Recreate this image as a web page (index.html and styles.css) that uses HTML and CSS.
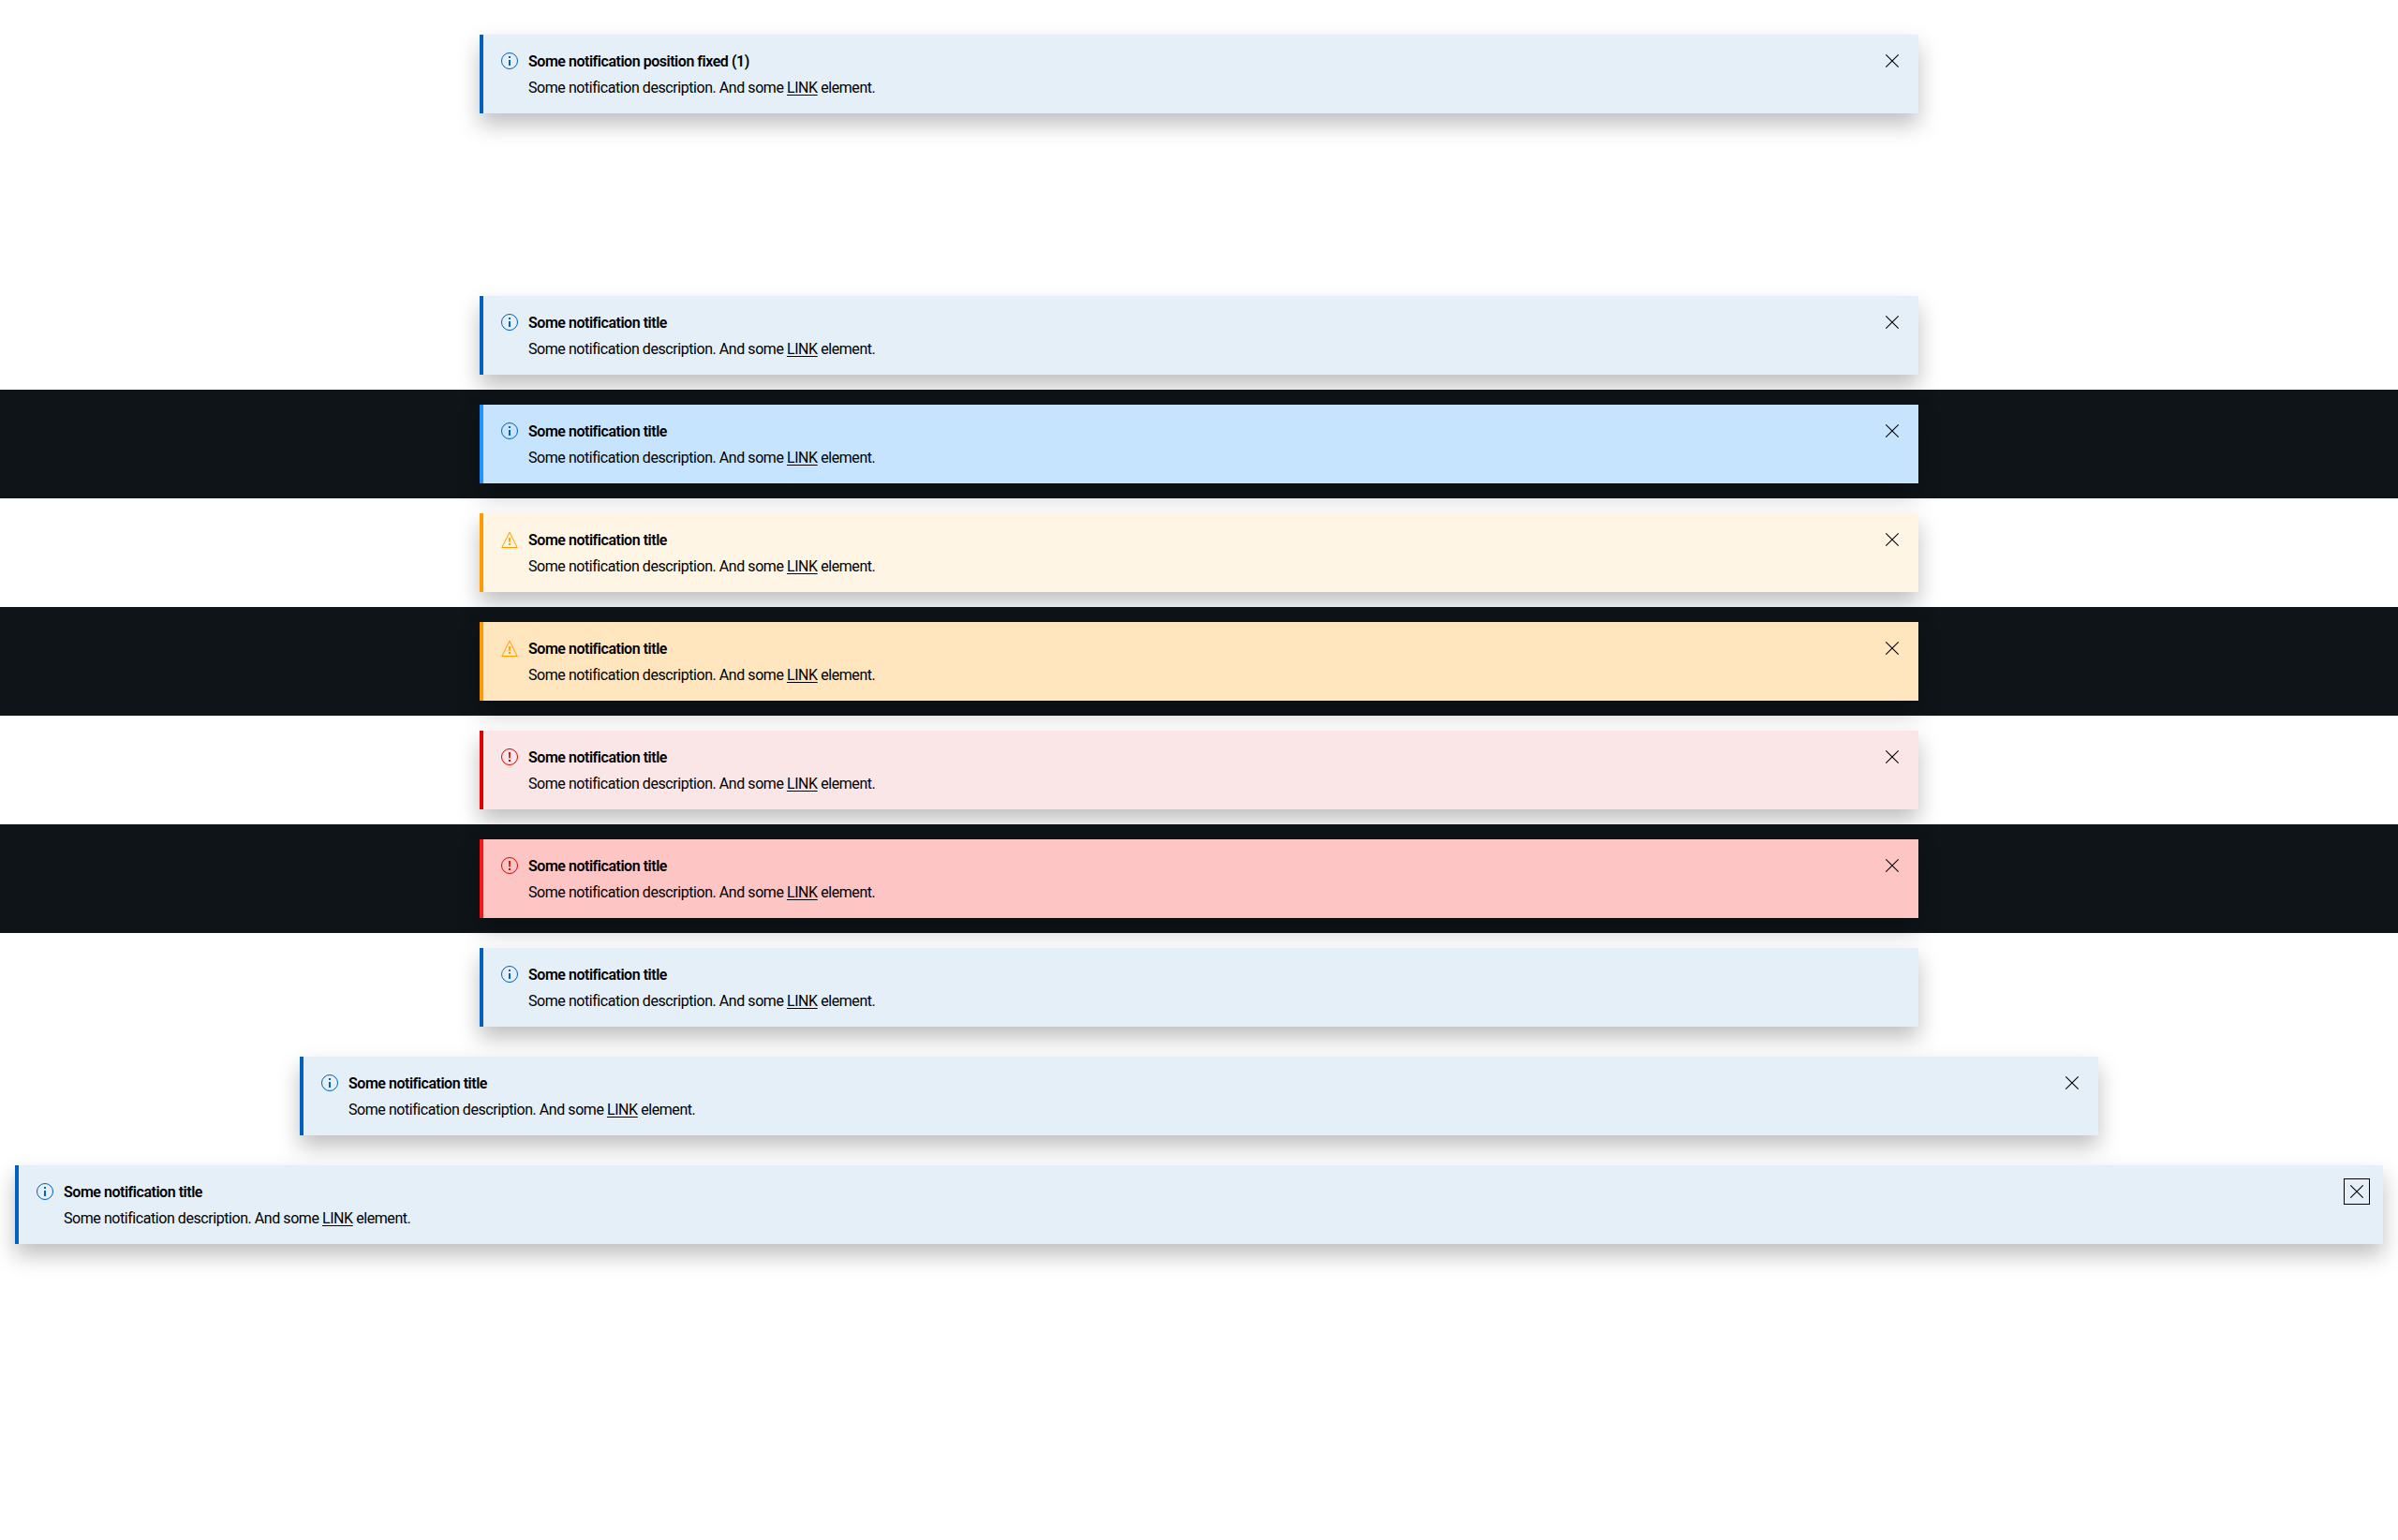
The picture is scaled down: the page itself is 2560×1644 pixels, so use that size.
FILE: index.html
```html
<!DOCTYPE html>
<html lang="en">
<head>
<meta charset="utf-8">
<title>Inline notifications</title>
<link rel="stylesheet" href="styles.css">
</head>
<body>
<svg class="defs" aria-hidden="true">
  <symbol id="info" viewBox="0 0 24 24"><circle cx="12" cy="12" r="8.5" fill="none" stroke="currentColor"/><path d="M11 7h2v2h-2zM11 11h2v6h-2z" fill="currentColor"/></symbol>
  <symbol id="warning" viewBox="0 0 24 24"><path d="M12 4.2 3.8 20.5h16.4z" fill="none" stroke="currentColor"/><path d="M11 10h2l-.3 5h-1.4zM11 16h2v2h-2z" fill="currentColor"/></symbol>
  <symbol id="error" viewBox="0 0 24 24"><circle cx="12" cy="12" r="8.5" fill="none" stroke="currentColor"/><path d="M11 7h2l-.3 6.500h-1.400zM11 15h2v2h-2z" fill="currentColor"/></symbol>
  <symbol id="close" viewBox="0 0 24 24"><path d="M5.300 5.300l13.400 13.400M18.700 5.300l-13.400 13.400" fill="none" stroke="currentColor" stroke-width="1.1"/></symbol>
</svg>
<main>
  <section class="row first"><div class="note info"><svg class="icon"><use href="#info"/></svg><div class="text"><h2>Some notification position fixed (1)</h2><p>Some notification description. And some <a href="#">LINK</a> element.</p></div><button aria-label="Close"><svg><use href="#close"/></svg></button></div></section>
  <section class="row"><div class="note info"><svg class="icon"><use href="#info"/></svg><div class="text"><h2>Some notification title</h2><p>Some notification description. And some <a href="#">LINK</a> element.</p></div><button aria-label="Close"><svg><use href="#close"/></svg></button></div></section>
  <section class="row dark"><div class="note info"><svg class="icon"><use href="#info"/></svg><div class="text"><h2>Some notification title</h2><p>Some notification description. And some <a href="#">LINK</a> element.</p></div><button aria-label="Close"><svg><use href="#close"/></svg></button></div></section>
  <section class="row"><div class="note warning"><svg class="icon"><use href="#warning"/></svg><div class="text"><h2>Some notification title</h2><p>Some notification description. And some <a href="#">LINK</a> element.</p></div><button aria-label="Close"><svg><use href="#close"/></svg></button></div></section>
  <section class="row dark"><div class="note warning"><svg class="icon"><use href="#warning"/></svg><div class="text"><h2>Some notification title</h2><p>Some notification description. And some <a href="#">LINK</a> element.</p></div><button aria-label="Close"><svg><use href="#close"/></svg></button></div></section>
  <section class="row"><div class="note error"><svg class="icon"><use href="#error"/></svg><div class="text"><h2>Some notification title</h2><p>Some notification description. And some <a href="#">LINK</a> element.</p></div><button aria-label="Close"><svg><use href="#close"/></svg></button></div></section>
  <section class="row dark"><div class="note error"><svg class="icon"><use href="#error"/></svg><div class="text"><h2>Some notification title</h2><p>Some notification description. And some <a href="#">LINK</a> element.</p></div><button aria-label="Close"><svg><use href="#close"/></svg></button></div></section>
  <section class="row"><div class="note info"><svg class="icon"><use href="#info"/></svg><div class="text"><h2>Some notification title</h2><p>Some notification description. And some <a href="#">LINK</a> element.</p></div></div></section>
  <section class="row extended"><div class="note info"><svg class="icon"><use href="#info"/></svg><div class="text"><h2>Some notification title</h2><p>Some notification description. And some <a href="#">LINK</a> element.</p></div><button aria-label="Close"><svg><use href="#close"/></svg></button></div></section>
  <section class="row full"><div class="note info"><svg class="icon"><use href="#info"/></svg><div class="text"><h2>Some notification title</h2><p>Some notification description. And some <a href="#">LINK</a> element.</p></div><button class="focused" aria-label="Close"><svg><use href="#close"/></svg></button></div></section>
</main>
</body>
</html>
```
FILE: styles.css
```css
body { margin: 0; background: #fff; color: #000; font: 16px/24px Roboto, sans-serif; }
.defs { display: none; }
main { box-sizing: border-box; display: flex; flex-direction: column; min-height: 100vh; padding-top: 21px; }
.row { display: flex; justify-content: center; padding: 16px; }
.first { margin-bottom: 163px; }
.dark { background: #0e1418; }
.note {
  position: relative;
  box-sizing: border-box;
  display: flex;
  align-items: flex-start;
  gap: 8px;
  width: 1536px;
  height: 84px;
  padding: 16px;
  border-left: 4px solid var(--accent);
  background: var(--fill);
  box-shadow: 0 12px 22px rgba(0, 0, 0, .25);
}
.extended .note { width: 1920px; }
.full .note { width: 100%; }
.info { --accent: #0061bd; --icon: #0061bd; --fill: #e5eff8; }
.warning { --accent: #ff9b00; --icon: #ff9b00; --fill: #fff5e5; }
.error { --accent: #e00000; --icon: #e00000; --fill: #fae6e6; }
.dark .info { --accent: #2193ff; --fill: #c7e4ff; }
.dark .warning { --fill: #ffe6bf; }
.dark .error { --accent: #fc1717; --fill: #fec5c5; }
.icon { width: 24px; height: 24px; color: var(--icon); }
.text { display: flex; flex-direction: column; flex: 1; gap: 4px; padding-top: 1px; }
h2, p { margin: 0; font-size: 16px; line-height: 24px; }
h2 { font-weight: 600; letter-spacing: -.47px; }
p { letter-spacing: -.44px; }
a { color: inherit; text-decoration: underline; text-underline-offset: 2px; text-decoration-thickness: 1px; }
button { display: flex; width: 24px; height: 24px; padding: 0; border: 0; background: none; color: #000; }
button svg { width: 24px; height: 24px; }
.focused { outline: 1px solid #000; outline-offset: 1px; }
```
